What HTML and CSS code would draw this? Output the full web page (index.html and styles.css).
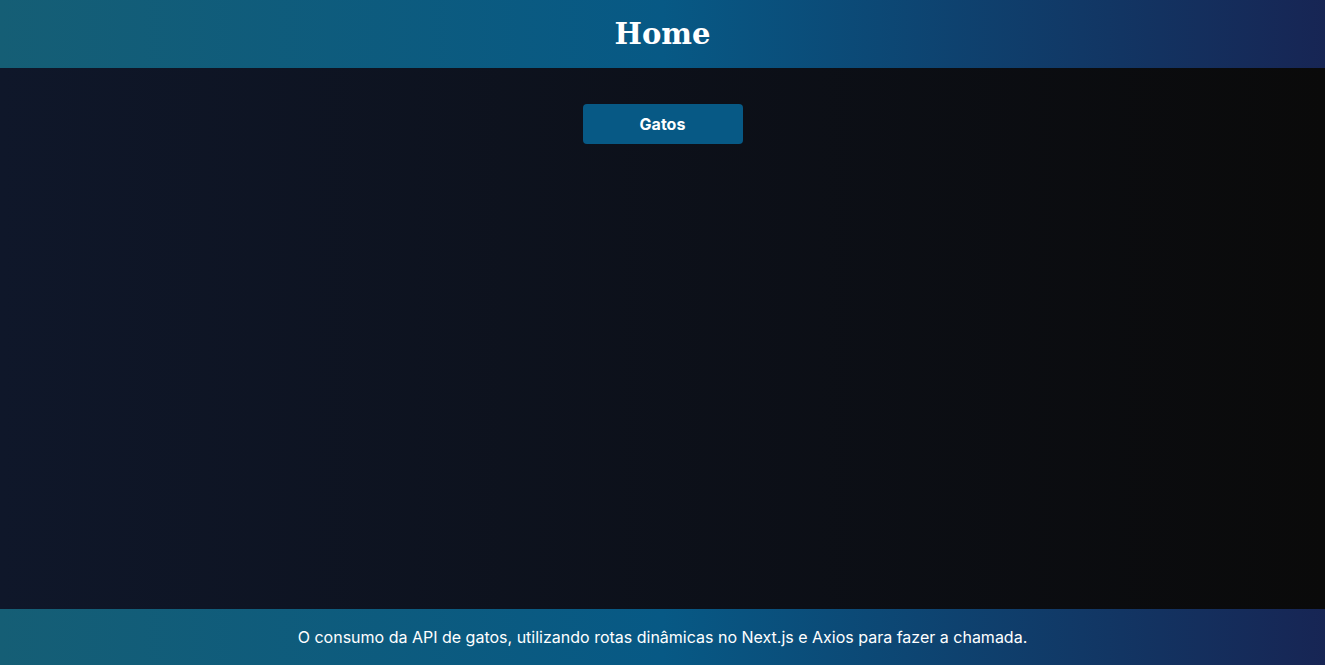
FILE: index.html
```html
<!DOCTYPE html>
<html lang="pt">
<head>
<meta charset="utf-8">
<title>Home</title>
<link rel="stylesheet" href="styles.css">
</head>
<body>
<div class="page">
  <header class="header">
    <h1 class="title">Home</h1>
  </header>
  <main class="main">
    <a class="btn" href="#">Gatos</a>
  </main>
  <footer class="footer">
    <p>O consumo da API de gatos, utilizando rotas dinâmicas no Next.js e Axios para fazer a chamada.</p>
  </footer>
</div>
</body>
</html>
```

FILE: styles.css
```css
* { box-sizing: border-box; }
html, body { margin: 0; padding: 0; height: 100%; }
body {
  font-family: Inter, "Noto Sans", sans-serif;
  color: #fff;
}
.page {
  min-height: 100vh;
  display: flex;
  flex-direction: column;
  background: linear-gradient(to right, #0f172a, #0a0a0a);
}
.header {
  height: 68px;
  display: flex;
  align-items: center;
  justify-content: center;
  background: linear-gradient(to right, #155e75, #075985, #172554);
}
.title {
  margin: 0;
  font-family: "DejaVu Serif", serif;
  font-weight: bold;
  font-size: 29px;
  line-height: 36px;
}
.main {
  flex: 1;
  display: flex;
  flex-direction: column;
  align-items: center;
  padding-top: 36px;
}
.btn {
  width: 160px;
  height: 40px;
  display: flex;
  align-items: center;
  justify-content: center;
  background: #075985;
  border-radius: 4px;
  color: #fff;
  font-weight: 700;
  font-size: 16px;
  text-decoration: none;
}
.footer {
  height: 56px;
  display: flex;
  align-items: center;
  justify-content: center;
  background: linear-gradient(to right, #155e75, #075985, #172554);
}
.footer p { margin: 0; font-size: 16px; }
```
